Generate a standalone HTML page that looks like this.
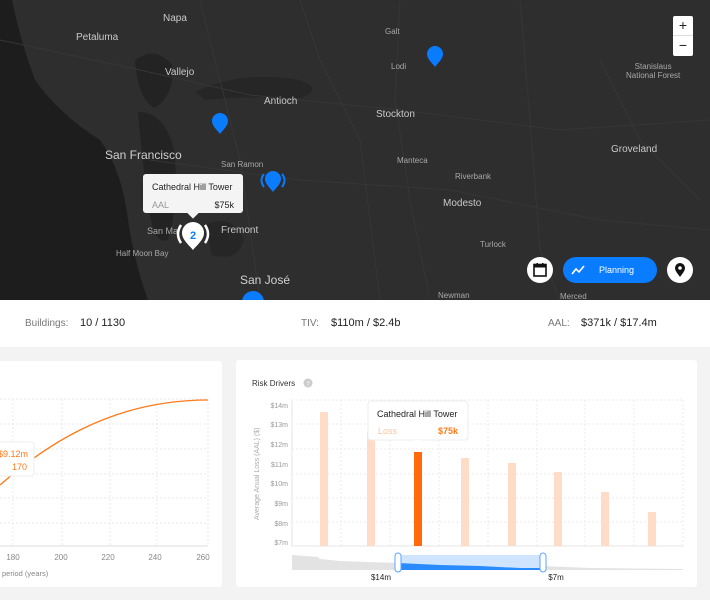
<!DOCTYPE html>
<html><head><meta charset="utf-8"><style>
*{margin:0;padding:0;box-sizing:border-box}
body{width:710px;height:600px;overflow:hidden;background:#f3f3f3;font-family:"Liberation Sans",sans-serif;position:relative}
.abs{position:absolute}
.lbl{position:absolute;color:#c9c9c9;font-size:10px;white-space:nowrap}
.big{font-size:12px;color:#d0d0d0}
.sm{font-size:8px;color:#a8a8a8}
</style></head><body>
<div class="abs" style="left:0;top:0;width:710px;height:300px;background:#2e2e2e;overflow:hidden">
<svg width="710" height="300" class="abs" style="left:0;top:0">
<path d="M0 0 L12 0 Q20 40 35 80 Q60 115 100 140 Q122 170 128 220 Q135 265 148 300 L0 300Z" fill="#1d1d1d"/>
<path d="M135 60 Q155 45 172 65 Q175 95 155 108 Q138 100 135 60Z" fill="#232323"/>
<path d="M138 112 Q165 112 174 150 Q180 200 168 240 Q155 245 150 215 Q143 170 138 112Z" fill="#232323"/>
<path d="M205 225 Q232 212 244 240 Q238 262 212 255Z" fill="#262626"/>
<path d="M195 92 Q240 70 300 80 Q325 90 300 98 Q240 96 205 100Z" fill="#262626"/>
<g stroke="#363636" stroke-width="1" fill="none">
<path d="M0 40 L140 70 L250 95 L400 110 L560 130 L710 120"/>
<path d="M200 0 L220 80 L240 160 L260 300"/>
<path d="M400 0 L395 100 L410 200 L430 300"/>
<path d="M150 160 L300 180 L450 190 L600 220 L710 230"/>
<path d="M520 0 L530 120 L540 250 L560 300"/>
<path d="M300 0 L320 60 L360 140 L380 300"/>
<path d="M600 60 L640 140 L700 200"/>
</g>
</svg>
<div class="lbl" style="left:163px;top:13px">Napa</div>
<div class="lbl" style="left:76px;top:32px">Petaluma</div>
<div class="lbl" style="left:165px;top:67px">Vallejo</div>
<div class="lbl" style="left:264px;top:96px">Antioch</div>
<div class="lbl" style="left:376px;top:109px">Stockton</div>
<div class="lbl sm" style="left:385px;top:27px">Galt</div>
<div class="lbl sm" style="left:391px;top:62px">Lodi</div>
<div class="lbl big" style="left:105px;top:148px">San Francisco</div>
<div class="lbl sm" style="left:221px;top:160px">San Ramon</div>
<div class="lbl sm" style="left:397px;top:156px">Manteca</div>
<div class="lbl sm" style="left:455px;top:172px">Riverbank</div>
<div class="lbl" style="left:443px;top:198px">Modesto</div>
<div class="lbl sm" style="left:480px;top:240px">Turlock</div>
<div class="lbl" style="left:611px;top:144px">Groveland</div>
<div class="lbl sm" style="left:626px;top:62px;text-align:center;line-height:9px">Stanislaus<br>National Forest</div>
<div class="lbl" style="left:221px;top:225px">Fremont</div>
<div class="lbl sm" style="left:147px;top:226px;font-size:9px">San Ma</div>
<div class="lbl sm" style="left:116px;top:249px">Half Moon Bay</div>
<div class="lbl big" style="left:240px;top:273px">San José</div>
<div class="lbl sm" style="left:438px;top:291px">Newman</div>
<div class="lbl sm" style="left:560px;top:292px">Merced</div>
<svg width="710" height="300" class="abs" style="left:0;top:0">
<g fill="#0a7cff">
<path transform="translate(212,113)" d="M8 21 C6 18 0 13 0 8 A8 8 0 0 1 16 8 C16 13 10 18 8 21Z"/>
<path transform="translate(427,46)" d="M8 21 C6 18 0 13 0 8 A8 8 0 0 1 16 8 C16 13 10 18 8 21Z"/>
<path transform="translate(265,171)" d="M8 21 C6 18 0 13 0 8 A8 8 0 0 1 16 8 C16 13 10 18 8 21Z"/>
<circle cx="253" cy="302" r="11"/>
</g>
<g stroke="#0a7cff" stroke-width="2" fill="none"><path d="M264 174 Q259 180 264 187"/><path d="M282 174 Q287 180 282 187"/></g>
<path transform="translate(182,222)" d="M11 28 C8 24 0 18 0 11 A11 11 0 0 1 22 11 C22 18 14 24 11 28Z" fill="#fff"/>
<g stroke="#fff" stroke-width="2.5" fill="none"><path d="M181 225 Q175 234 181 243"/><path d="M205 225 Q211 234 205 243"/></g>
<text x="193" y="239" font-size="11" font-weight="bold" fill="#0a7cff" text-anchor="middle" font-family="Liberation Sans">2</text>
</svg>
<div class="abs" style="left:143px;top:174px;width:100px;height:39px;background:#f4f4f4;border-radius:3px;font-size:9px;color:#222;padding:8px 9px">
<div>Cathedral Hill Tower</div>
<div style="display:flex;justify-content:space-between;margin-top:8px"><span style="color:#999">AAL</span><span>$75k</span></div>
<div class="abs" style="left:46px;bottom:-4px;width:8px;height:8px;background:#f4f4f4;transform:rotate(45deg)"></div>
</div>
<div class="abs" style="left:673px;top:16px;width:20px;height:40px;background:#fff;border-radius:2px;text-align:center;font-size:14px;line-height:19px;color:#222">+<div style="border-top:1px solid #ddd">−</div></div>
<div class="abs" style="left:527px;top:257px;width:26px;height:26px;border-radius:50%;background:#fff">
<svg class="abs" style="left:6px;top:6px" width="14" height="14"><rect x="1" y="1.5" width="12" height="11.5" fill="none" stroke="#111" stroke-width="1.6"/><rect x="1" y="1.5" width="12" height="3" fill="#111"/><rect x="3.5" y="0" width="1.5" height="3" fill="#111"/><rect x="9" y="0" width="1.5" height="3" fill="#111"/></svg></div>
<div class="abs" style="left:563px;top:257px;width:94px;height:26px;border-radius:13px;background:#0a7cff;color:#fff;font-size:9px;line-height:26px;padding-left:36px">Planning
<svg class="abs" style="left:8px;top:8px" width="14" height="10"><path d="M1 9 L5 4 L8 7 L13 1" stroke="#fff" stroke-width="1.6" fill="none"/></svg></div>
<div class="abs" style="left:667px;top:257px;width:26px;height:26px;border-radius:50%;background:#fff">
<svg class="abs" style="left:8px;top:6px" width="10" height="14"><path d="M5 14 C3 11 0 8 0 5 A5 5 0 0 1 10 5 C10 8 7 11 5 14Z" fill="#111"/><circle cx="5" cy="5" r="1.8" fill="#fff"/></svg></div>
</div>
<div class="abs" style="left:0;top:300px;width:710px;height:47px;background:#fff;font-size:10px;color:#222">
<span class="abs" style="left:25px;top:18px;color:#777">Buildings:</span><span class="abs" style="left:80px;top:17px;font-size:11px">10 / 1130</span>
<span class="abs" style="left:301px;top:18px;color:#777">TIV:</span><span class="abs" style="left:331px;top:17px;font-size:11px">$110m / $2.4b</span>
<span class="abs" style="left:548px;top:18px;color:#777">AAL:</span><span class="abs" style="left:581px;top:17px;font-size:11px">$371k / $17.4m</span>
</div>
<div class="abs" style="left:-5px;top:361px;width:227px;height:226px;background:#fff;border-radius:3px"></div>
<div class="abs" style="left:236px;top:360px;width:461px;height:227px;background:#fff;border-radius:3px"></div>
<svg width="710" height="600" class="abs" style="left:0;top:0;font-family:Liberation Sans">
<g stroke="#e8e8e8" stroke-dasharray="2 2">
<path d="M0 399H208M0 424H208M0 449H208M0 474H208M0 498H208M0 523H208M13 399V546M62 399V546M110 399V546M157 399V546M208 399V546"/>
</g>
<path d="M0 546H208" stroke="#ddd"/>
<path d="M0 485 Q40 450 80 430 Q140 400 208 400" stroke="#ff7a1a" stroke-width="1.3" fill="none"/>
<g font-size="8" fill="#888" text-anchor="middle"><text x="13" y="560">180</text><text x="61" y="560">200</text><text x="108" y="560">220</text><text x="155" y="560">240</text><text x="203" y="560">260</text></g>
<text x="2" y="576" font-size="7.5" fill="#888">period (years)</text>
<rect x="-4" y="442" width="38" height="34" rx="3" fill="#fff" stroke="#eee"/>
<text x="28" y="457" font-size="9" fill="#ff7a1a" text-anchor="end">$9.12m</text>
<text x="27" y="470" font-size="9" fill="#ff7a1a" text-anchor="end">170</text>
<text x="252" y="386" font-size="8" fill="#333">Risk Drivers</text>
<circle cx="308" cy="383" r="4.5" fill="#ccc"/><text x="308" y="386" font-size="6" fill="#fff" text-anchor="middle">?</text>
<g stroke="#ebebeb" stroke-dasharray="2 2">
<path d="M292 400H683M292 424H683M292 449H683M292 474H683M292 498H683M292 522H683M341 400V546M390 400V546M439 400V546M488 400V546M537 400V546M585 400V546M634 400V546M683 400V546"/>
</g>
<path d="M292 400V546H683" stroke="#e6e6e6" fill="none"/>
<g font-size="7" fill="#999" text-anchor="end"><text x="288" y="408">$14m</text><text x="288" y="427">$13m</text><text x="288" y="447">$12m</text><text x="288" y="467">$11m</text><text x="288" y="486">$10m</text><text x="288" y="506">$9m</text><text x="288" y="526">$8m</text><text x="288" y="545">$7m</text></g>
<text transform="translate(259,520) rotate(-90)" font-size="7" fill="#aaa">Average Anual Loss (AAL) ($)</text>
<g fill="#ffdcc7">
<rect x="320" y="412" width="8" height="134"/><rect x="367" y="432" width="8" height="114"/><rect x="461" y="458" width="8" height="88"/><rect x="508" y="463" width="8" height="83"/><rect x="554" y="472" width="8" height="74"/><rect x="601" y="492" width="8" height="54"/><rect x="648" y="512" width="8" height="34"/>
</g>
<rect x="414" y="452" width="8" height="94" fill="#ff6a0a"/>
<path d="M292 555 L318 557 L320 559 L340 561 L398 563 L398 570 L292 570Z" fill="#e3e3e3"/>
<path d="M543 566 L590 568 L683 569 L683 570 L543 570Z" fill="#e3e3e3"/>
<rect x="398" y="555" width="145" height="15" fill="#cfe4ff"/>
<path d="M398 563 L440 565 L480 566 L520 568 L543 568 L543 570 L398 570Z" fill="#2a8bff"/>
<rect x="395" y="553" width="6" height="19" rx="3" fill="#fff" stroke="#5ba5ff"/>
<rect x="540" y="553" width="6" height="19" rx="3" fill="#fff" stroke="#5ba5ff"/>
<text x="381" y="580" font-size="8" fill="#222" text-anchor="middle">$14m</text>
<text x="556" y="580" font-size="8" fill="#222" text-anchor="middle">$7m</text>
<rect x="368" y="401" width="100" height="39" rx="3" fill="#fff" stroke="#eee"/>
<path d="M414 440 L418 444 L422 440Z" fill="#fff"/>
<text x="377" y="417" font-size="9" fill="#222">Cathedral Hill Tower</text>
<text x="378" y="434" font-size="9" fill="#ffc3a0">Loss</text>
<text x="458" y="434" font-size="9" fill="#ff7a1a" text-anchor="end" font-weight="bold">$75k</text>
</svg>
</body></html>
